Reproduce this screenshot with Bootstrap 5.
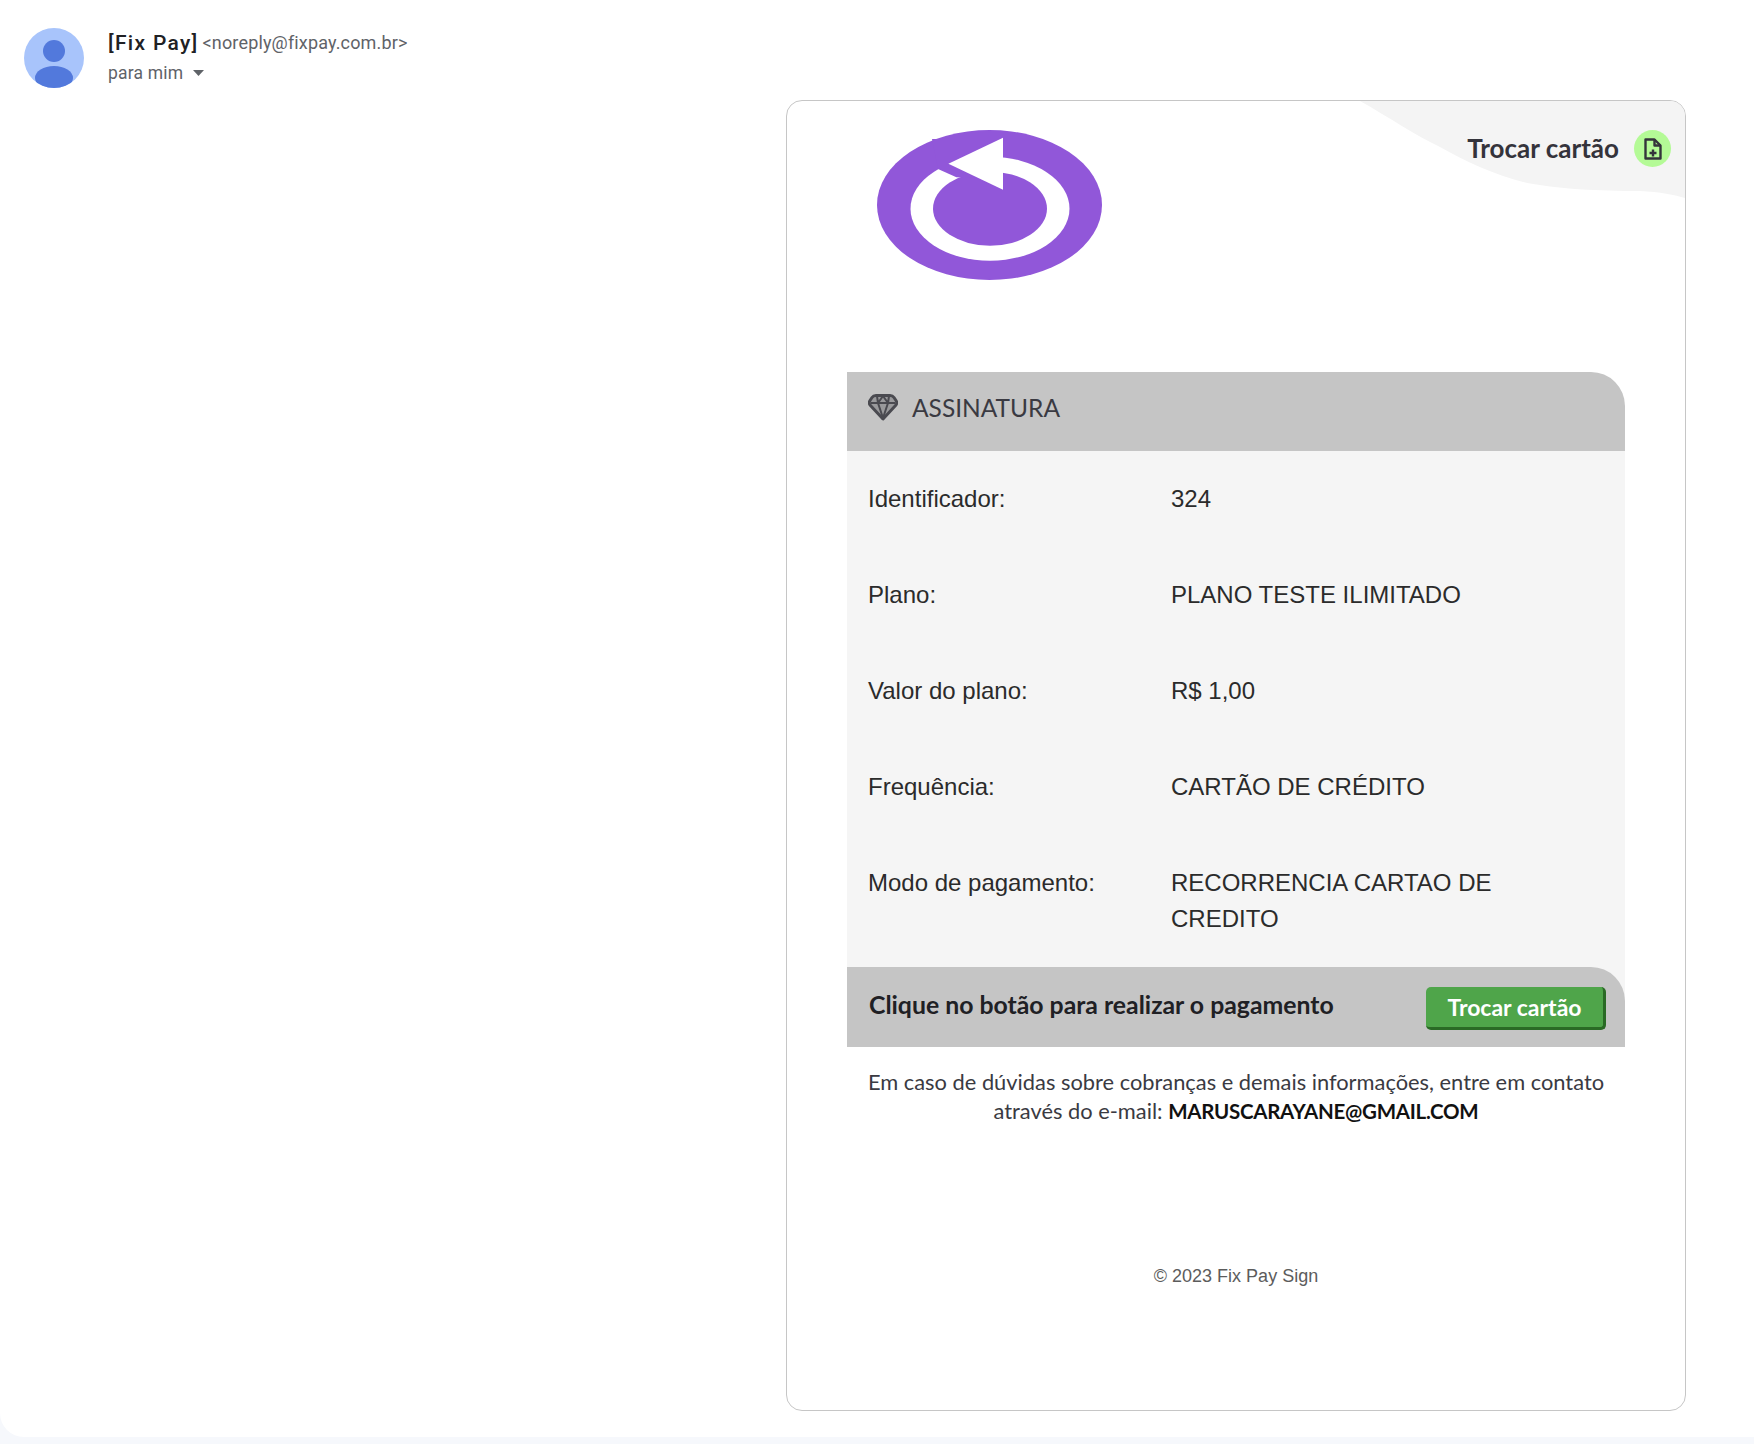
<!DOCTYPE html>
<html lang="pt-BR">

<head>
    <meta charset="UTF-8">
    <meta name="viewport" content="width=device-width, initial-scale=1">
    <title>Trocar cartão</title>
    <link href="https://cdn.jsdelivr.net/npm/bootstrap@5.3.3/dist/css/bootstrap.min.css" rel="stylesheet">
    <style>
        body {
            background-color: #f6f8fc;
            font-family: "Liberation Sans", Arial, sans-serif;
        }

        .mail-sheet {
            height: 1437px;
            background-color: #fff;
            border-bottom-left-radius: 24px;
            overflow: hidden;
        }

        .mail-head {
            height: 100px;
            padding: 28px 0 0 24px;
            font-family: Roboto, sans-serif;
            color: #5f6368;
        }

        .mail-avatar {
            width: 60px;
            height: 60px;
            margin-right: 24px;
        }

        .sender-name {
            font-size: 21px;
            font-weight: 500;
            letter-spacing: 1.3px;
            color: #202124;
            line-height: 30px;
        }

        .sender-mail {
            font-size: 18px;
            letter-spacing: .15px;
            line-height: 30px;
        }

        .to-me {
            font-size: 17.5px;
            letter-spacing: .2px;
            line-height: 30px;
        }

        .to-caret {
            width: 11px;
            height: 6px;
            margin-left: 10px;
        }

        .mail-box {
            width: 900px;
            height: 1311px;
            margin-left: 786px;
            border: 1px solid #c6c6c6;
            border-radius: 16px;
            overflow: hidden;
        }

        .corner-shape {
            position: absolute;
            top: 0;
            right: 0;
            width: 325px;
            height: 97px;
        }

        .swap-link {
            position: absolute;
            top: 28px;
            right: 14px;
            font-family: Lato, sans-serif;
            font-size: 26px;
            font-weight: 700;
            color: #34333b;
        }

        .swap-round {
            width: 37px;
            height: 37px;
            margin-left: 15px;
            background-color: #b4fa96;
        }

        .brand-mark {
            display: block;
            width: 226px;
            height: 152px;
            margin: 28px 0 0 90px;
        }

        .plan-panel {
            width: 778px;
            margin: 91px 0 0 60px;
        }

        .plan-head {
            height: 79px;
            padding: 0 0 6px 21px;
            background-color: #c5c5c5;
            border-top-right-radius: 34px;
            font-family: Lato, sans-serif;
            font-size: 24.500px;
            color: #3a3a42;
        }

        .plan-head svg {
            width: 30px;
            height: 28px;
            margin: 0 14px 3px 0;
            filter: blur(.5px);
        }

        .plan-body {
            background-color: #f5f5f5;
        }

        .plan-row {
            padding: 30px 21px 30px 21px;
            font-size: 24px;
            line-height: 36px;
            color: #2b2b2b;
        }

        .plan-label {
            width: 303px;
            flex: none;
        }

        .plan-value {
            width: 400px;
        }

        .pay-bar {
            height: 80px;
            padding: 0 19px 0 22px;
            background-color: #c5c5c5;
            border-top-right-radius: 34px;
            font-family: Lato, sans-serif;
            font-size: 24.800px;
            font-weight: 700;
            color: #202024;
        }

        .pay-label {
            margin-bottom: 4px;
        }

        .pay-btn {
            width: 180px;
            height: 43px;
            margin-top: 3px;
            padding: 0;
            background-color: #4fa54a;
            border: 0;
            border-right: 3px solid #2a6a25;
            border-bottom: 3px solid #2a6a25;
            border-radius: 5px;
            font-size: 23px;
            font-weight: 700;
            line-height: 40px;
            color: #fff;
        }

        .help-note {
            width: 778px;
            margin: 21px 0 0 60px;
            font-family: Lato, sans-serif;
            font-size: 21.850px;
            line-height: 28.500px;
            color: #3a3a42;
        }

        .help-note strong {
            font-size: 20.500px;
            letter-spacing: -.27px;
            color: #111;
        }

        .copy-note {
            width: 778px;
            margin: 138px 0 0 60px;
            font-size: 18px;
            color: #5c5c5c;
        }
    </style>
</head>

<body>

    <div class="mail-sheet">
        <div class="mail-head d-flex">
            <svg class="mail-avatar" viewBox="0 0 60 60">
                <defs>
                    <clipPath id="avatarClip"><circle cx="30" cy="30" r="30"></circle></clipPath>
                </defs>
                <circle cx="30" cy="30" r="30" fill="#a8c4fb"></circle>
                <g clip-path="url(#avatarClip)" fill="#5279dc">
                    <circle cx="30" cy="23" r="11"></circle>
                    <ellipse cx="30" cy="50" rx="19" ry="12"></ellipse>
                </g>
            </svg>
            <div>
                <div class="d-flex align-items-center">
                    <span class="sender-name">[Fix Pay]</span>
                    <span class="sender-mail ms-1">&lt;noreply@fixpay.com.br&gt;</span>
                </div>
                <div class="to-me d-flex align-items-center">
                    para mim
                    <svg class="to-caret" viewBox="0 0 11 6"><path d="M0 0h11L5.500 6z" fill="#5f6368"></path></svg>
                </div>
            </div>
        </div>

        <div class="mail-box position-relative">
            <svg class="corner-shape" viewBox="0 0 325 97">
                <path d="M0 0 C30 17 55 34 80 46 C105 60 135 74 163 81 C195 88 240 90 280 90 C300 91 315 94 325 97 V0 Z" fill="#f4f4f4"></path>
            </svg>
            <div class="swap-link d-flex align-items-center">
                Trocar cartão
                <span class="swap-round rounded-circle d-flex align-items-center justify-content-center">
                    <svg width="20" height="24" viewBox="0 0 20 24" fill="none" stroke="#34333b" stroke-width="2.400" stroke-linejoin="round">
                        <path d="M2.500 2.500h9l6 6v13h-15z"></path>
                        <path d="M11.500 2.500v6h6"></path>
                        <path d="M6.500 16h7M10 12.500v7"></path>
                    </svg>
                </span>
            </div>

            <svg class="brand-mark" viewBox="0 0 226 152">
                <ellipse cx="112.500" cy="76" rx="112.500" ry="75" fill="#9157d9"></ellipse>
                <ellipse cx="113" cy="79.700" rx="79.500" ry="52" fill="#fff"></ellipse>
                <ellipse cx="113" cy="79.700" rx="57" ry="37" fill="#9157d9"></ellipse>
                <polygon points="61,40 79.400,48.300 126,50 126,10 55,10" fill="#9157d9"></polygon>
                <polygon points="126,8.700 71.400,34.700 126,60.700" fill="#fff"></polygon>
            </svg>

            <div class="plan-panel">
                <div class="plan-head d-flex align-items-center">
                    <svg viewBox="0 0 30 28" fill="none" stroke="#4a4a50" stroke-linejoin="round">
                        <path d="M8 2.500h14c2 0 3 .5 4 2l2 3c1 1.500 1 3 0 4.500L15 26 2 12c-1-1.500-1-3 0-4.500l2-3c1-1.500 2-2 4-2z" fill="#9a9a9c" stroke-width="3"></path>
                        <path d="M3 10h24M10 10l5 15 5-15M9 3l1 7 5-7 5 7 1-7" stroke-width="2"></path>
                    </svg>
                    ASSINATURA
                </div>
                <div class="plan-body">
                    <div class="plan-row d-flex">
                        <div class="plan-label">Identificador:</div>
                        <div class="plan-value">324</div>
                    </div>
                    <div class="plan-row d-flex">
                        <div class="plan-label">Plano:</div>
                        <div class="plan-value">PLANO TESTE ILIMITADO</div>
                    </div>
                    <div class="plan-row d-flex">
                        <div class="plan-label">Valor do plano:</div>
                        <div class="plan-value">R$ 1,00</div>
                    </div>
                    <div class="plan-row d-flex">
                        <div class="plan-label">Frequência:</div>
                        <div class="plan-value">CARTÃO DE CRÉDITO</div>
                    </div>
                    <div class="plan-row d-flex">
                        <div class="plan-label">Modo de pagamento:</div>
                        <div class="plan-value">RECORRENCIA CARTAO DE CREDITO</div>
                    </div>
                    <div class="pay-bar d-flex align-items-center justify-content-between">
                        <span class="pay-label">Clique no botão para realizar o pagamento</span>
                        <button type="button" class="btn pay-btn">Trocar cartão</button>
                    </div>
                </div>
            </div>

            <p class="help-note text-center mb-0">
                Em caso de dúvidas sobre cobranças e demais informações, entre em contato<br>
                através do e-mail: <strong>MARUSCARAYANE@GMAIL.COM</strong>
            </p>

            <p class="copy-note text-center mb-0">© 2023 Fix Pay Sign</p>
        </div>
    </div>

</body>

</html>
